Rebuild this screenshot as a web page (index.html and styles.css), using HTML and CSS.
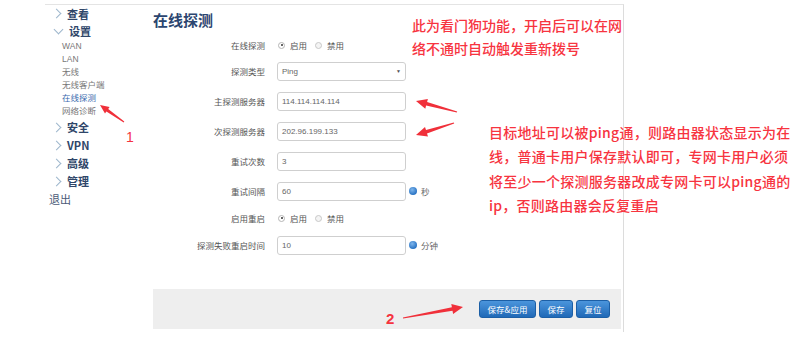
FILE: index.html
```html
<!DOCTYPE html>
<html lang="zh">
<head>
<meta charset="utf-8">
<link rel="stylesheet" href="styles.css">
</head>
<body>
<div class="page">
  <div class="frame">
    <nav class="sidebar">
      <div class="nav-item nav-first"><span class="chev chev-right"></span><span>查看</span></div>
      <div class="nav-item"><span class="chev chev-down"></span><span>设置</span></div>
      <div class="sub-item">WAN</div>
      <div class="sub-item">LAN</div>
      <div class="sub-item">无线</div>
      <div class="sub-item">无线客户端</div>
      <div class="sub-item sub-active">在线探测</div>
      <div class="sub-item">网络诊断</div>
      <div class="nav-item"><span class="chev chev-right"></span><span>安全</span></div>
      <div class="nav-item"><span class="chev chev-right"></span><span>VPN</span></div>
      <div class="nav-item"><span class="chev chev-right"></span><span>高级</span></div>
      <div class="nav-item"><span class="chev chev-right"></span><span>管理</span></div>
      <div class="nav-logout">退出</div>
    </nav>
    <main class="main">
      <h1 class="title">在线探测</h1>
      <div class="form">
        <div class="row row-radio1">
          <div class="label">在线探测</div>
          <div class="radios">
            <span class="radio radio-on"></span><span class="radio-text">启用</span>
            <span class="radio"></span><span class="radio-text">禁用</span>
          </div>
        </div>
        <div class="row">
          <div class="label">探测类型</div>
          <div class="input select"><span>Ping</span><span class="caret">▼</span></div>
        </div>
        <div class="row">
          <div class="label">主探测服务器</div>
          <div class="input">114.114.114.114</div>
        </div>
        <div class="row">
          <div class="label">次探测服务器</div>
          <div class="input">202.96.199.133</div>
        </div>
        <div class="row">
          <div class="label">重试次数</div>
          <div class="input">3</div>
        </div>
        <div class="row">
          <div class="label">重试间隔</div>
          <div class="input">60</div>
          <span class="info"></span><span class="unit">秒</span>
        </div>
        <div class="row row-radio2">
          <div class="label">启用重启</div>
          <div class="radios">
            <span class="radio radio-on"></span><span class="radio-text">启用</span>
            <span class="radio"></span><span class="radio-text">禁用</span>
          </div>
        </div>
        <div class="row">
          <div class="label">探测失败重启时间</div>
          <div class="input">10</div>
          <span class="info"></span><span class="unit">分钟</span>
        </div>
      </div>
      <div class="actions">
        <button class="btn btn-wide">保存&amp;应用</button>
        <button class="btn">保存</button>
        <button class="btn">复位</button>
      </div>
    </main>
  </div>

  <div class="note note-1">此为看门狗功能，开启后可以在网<br>络不通时自动触发重新拨号</div>
  <div class="note note-2">目标地址可以被ping通，则路由器状态显示为在<br>线，普通卡用户保存默认即可，专网卡用户必须<br>将至少一个探测服务器改成专网卡可以ping通的<br>ip，否则路由器会反复重启</div>
  <div class="mark mark-1">1</div>
  <div class="mark mark-2">2</div>

  <svg class="arrows" width="800" height="360" viewBox="0 0 800 360">
    <polygon points="124.3,121.6 108.2,109.0 109.6,106.9 100,105 105.0,113.5 106.4,111.4 123.7,122.4"/>
    <polygon points="457.2,111.4 427.1,102.1 427.9,99.0 416,101 425.3,108.7 426.1,105.6 456.8,112.6"/>
    <polygon points="453.8,122.4 426.0,130.0 425.0,126.9 416,135 428.0,136.5 427.0,133.4 454.2,123.6"/>
    <polygon points="402.9,317.4 451.9,307.2 451.3,304.1 463,307 453.1,313.9 452.5,310.8 403.1,318.6"/>
  </svg>
</div>
</body>
</html>
```

FILE: styles.css
```css
* { box-sizing: border-box; }
html, body { margin: 0; padding: 0; background: #fff; }
body {
  font-family: "Liberation Sans", "Noto Sans CJK SC", sans-serif;
  color: #555;
}
.page {
  position: relative;
  width: 800px;
  height: 360px;
  overflow: hidden;
}
.frame {
  margin: 4px 0 0 45px;
  width: 579px;
  height: 328px;
  border-top: 1px solid #e4e4e4;
  border-right: 1px solid #dcdcdc;
  display: flex;
}
.sidebar {
  width: 108px;
  flex: none;
  display: flex;
  flex-direction: column;
}
.nav-item {
  height: 18px;
  display: flex;
  align-items: center;
  padding-left: 10px;
  font-family: "Noto Sans CJK SC", sans-serif;
  font-weight: bold;
  font-size: 11px;
  color: #2f4669;
}
.nav-first { height: 17px; }
.chev {
  width: 7px;
  height: 7px;
  border-right: 1px solid #9db6cc;
  border-bottom: 1px solid #9db6cc;
  margin-right: 7px;
  flex: none;
}
.chev-right { transform: rotate(-45deg); margin-left: -2px; }
.chev-down { transform: translateY(-2px) rotate(45deg); }
.sub-item {
  height: 13px;
  line-height: 13px;
  padding-left: 17px;
  font-family: "Liberation Sans", "Noto Sans CJK SC", sans-serif;
  font-size: 8.5px;
  color: #777;
}
.sub-active { color: #3a6aae; }
.nav-logout {
  height: 18px;
  line-height: 18px;
  padding-left: 4px;
  font-family: "Noto Sans CJK SC", sans-serif;
  font-size: 11px;
  color: #4b5a78;
}
.main {
  flex: 1;
  display: flex;
  flex-direction: column;
}
.title {
  margin: 0;
  padding: 5px 0 4px;
  height: 29px;
  line-height: 20px;
  font-family: "Noto Sans CJK SC", sans-serif;
  font-size: 15px;
  font-weight: bold;
  color: #2c4670;
}
.form { display: flex; flex-direction: column; }
.row {
  height: 30px;
  display: flex;
  align-items: center;
}
.row-radio1 { height: 22px; }
.row-radio2 { height: 24px; }
.label {
  width: 112px;
  text-align: right;
  margin-right: 12px;
  font-family: "Noto Sans CJK SC", sans-serif;
  font-size: 8.5px;
  color: #555;
}
.input {
  width: 129px;
  height: 19px;
  border: 1px solid #cfcfcf;
  border-radius: 3px;
  padding-left: 4px;
  display: flex;
  align-items: center;
  font-size: 8px;
  color: #666;
  background: #fff;
}
.select { justify-content: space-between; padding-right: 4px; }
.caret { font-size: 5px; color: #555; }
.radios {
  display: flex;
  align-items: center;
  font-family: "Noto Sans CJK SC", sans-serif;
  font-size: 8.5px;
  color: #555;
}
.radio {
  width: 7px;
  height: 7px;
  border-radius: 50%;
  border: 1px solid #c8c8c8;
  background: #f4f4f4;
  margin-left: 1px;
  position: relative;
}
.radio + .radio-text { margin-left: 5px; }
.radio-text + .radio { margin-left: 8px; }
.radio-on { border-color: #b5b5b5; background: #fff; }
.radio-on::after {
  content: "";
  position: absolute;
  left: 1.5px;
  top: 1.5px;
  width: 2px;
  height: 2px;
  border-radius: 50%;
  background: #333;
}
.info {
  width: 8px;
  height: 8px;
  border-radius: 50%;
  margin-left: 3px;
  background: radial-gradient(circle at 40% 35%, #7fb6ec, #2a74c4 70%);
}
.unit {
  margin-left: 4px;
  font-family: "Noto Sans CJK SC", sans-serif;
  font-size: 8.5px;
  color: #666;
}
.actions {
  margin: 29px 2px 0 0;
  height: 40px;
  background: #eeeeee;
  display: flex;
  align-items: center;
  justify-content: flex-end;
  gap: 3px;
  padding-right: 11px;
}
.btn {
  height: 18px;
  width: 34px;
  padding: 0;
  border: 1px solid #1c5fa6;
  border-radius: 3px;
  background: linear-gradient(#4b95dc, #2069b7);
  color: #fff;
  font-family: "Noto Sans CJK SC", sans-serif;
  font-size: 8.5px;
  line-height: 16px;
}
.btn-wide { width: 57px; }
.note {
  position: absolute;
  white-space: nowrap;
  font-family: "Noto Sans CJK SC", sans-serif;
  font-size: 14px;
  font-weight: 500;
  color: #f7343f;
}
.note-1 { left: 412px; top: 14px; line-height: 23px; }
.note-2 { left: 489px; top: 120px; line-height: 24.4px; letter-spacing: 0.25px; }
.mark {
  position: absolute;
  font-family: "Liberation Sans", sans-serif;
  color: #f5333f;
}
.mark-1 { left: 126px; top: 129px; font-size: 14px; }
.mark-2 { left: 386px; top: 310px; font-size: 15px; font-weight: bold; }
.arrows {
  position: absolute;
  left: 0;
  top: 0;
  fill: #f0303a;
}
```
